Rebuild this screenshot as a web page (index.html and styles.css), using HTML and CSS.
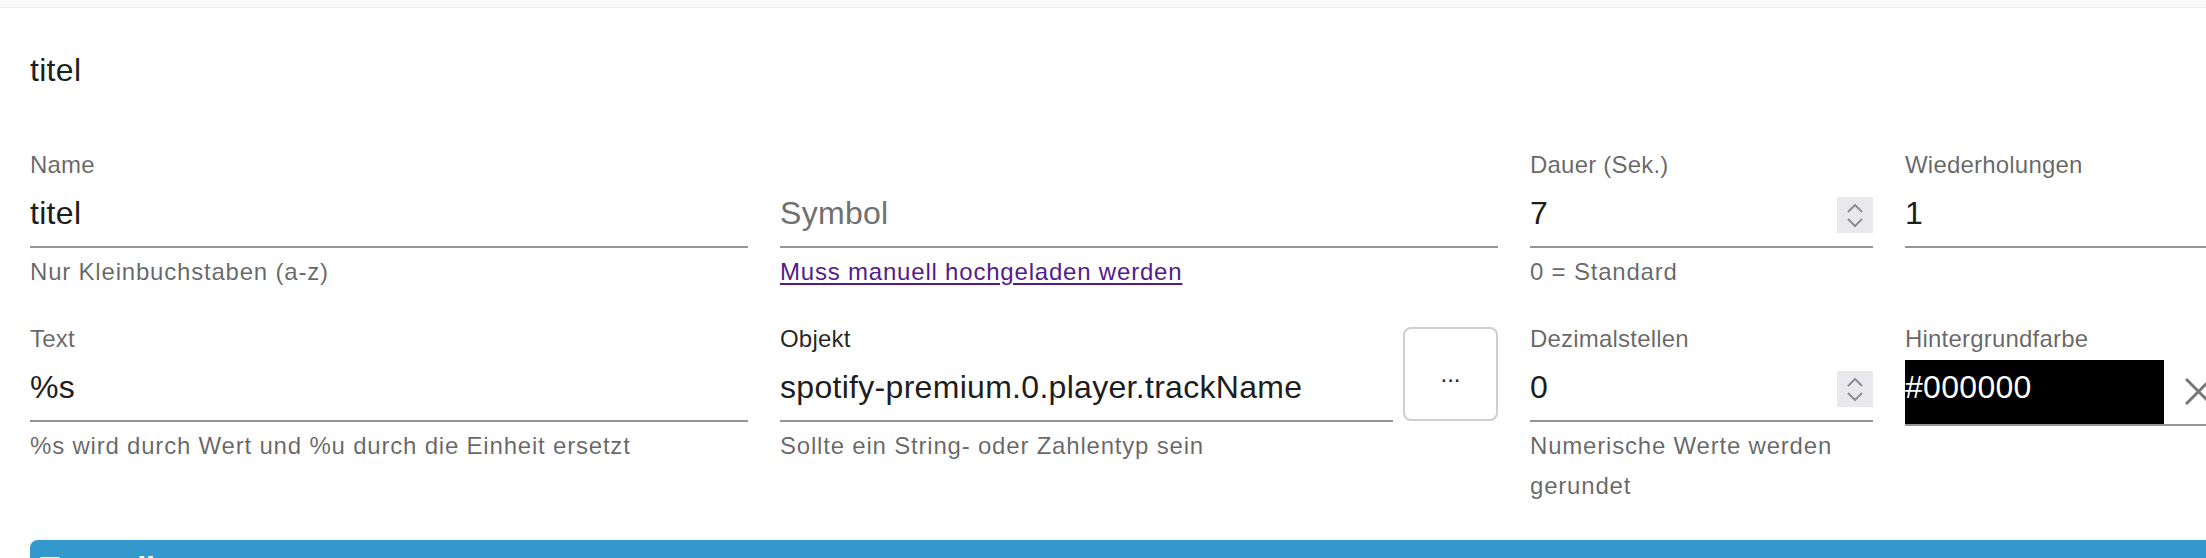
FILE: index.html
```html
<!DOCTYPE html>
<html lang="de">
<head>
<meta charset="utf-8">
<title>titel</title>
<link rel="stylesheet" href="styles.css">
</head>
<body>
<div class="topbar"></div>
<div class="title">titel</div>
<div class="grid">
  <div class="field">
    <div class="lbl">Name</div>
    <div class="inp"><span class="val">titel</span></div>
    <div class="help">Nur Kleinbuchstaben (a-z)</div>
  </div>
  <div class="field">
    <div class="lbl"></div>
    <div class="inp"><span class="val placeholder">Symbol</span></div>
    <div class="help"><a class="link" href="#">Muss manuell hochgeladen werden</a></div>
  </div>
  <div class="field">
    <div class="lbl">Dauer (Sek.)</div>
    <div class="inp"><span class="val">7</span>
      <span class="spin"><svg width="36" height="36" viewBox="0 0 36 36"><path d="M11 15 L18 8 L25 15 M11 22 L18 29 L25 22" fill="none" stroke="#8e8e93" stroke-width="2"/></svg></span>
    </div>
    <div class="help">0 = Standard</div>
  </div>
  <div class="field">
    <div class="lbl">Wiederholungen</div>
    <div class="inp"><span class="val">1</span>
      <span class="spin"><svg width="36" height="36" viewBox="0 0 36 36"><path d="M11 15 L18 8 L25 15 M11 22 L18 29 L25 22" fill="none" stroke="#8e8e93" stroke-width="2"/></svg></span>
    </div>
  </div>

  <div class="field">
    <div class="lbl">Text</div>
    <div class="inp"><span class="val">%s</span></div>
    <div class="help">%s wird durch Wert und %u durch die Einheit ersetzt</div>
  </div>
  <div class="field">
    <div class="objrow">
      <div class="objfield">
        <div class="lbl dark">Objekt</div>
        <div class="inp"><span class="val">spotify-premium.0.player.trackName</span></div>
      </div>
      <button class="dots" type="button">...</button>
    </div>
    <div class="help">Sollte ein String- oder Zahlentyp sein</div>
  </div>
  <div class="field">
    <div class="lbl">Dezimalstellen</div>
    <div class="inp"><span class="val">0</span>
      <span class="spin"><svg width="36" height="36" viewBox="0 0 36 36"><path d="M11 15 L18 8 L25 15 M11 22 L18 29 L25 22" fill="none" stroke="#8e8e93" stroke-width="2"/></svg></span>
    </div>
    <div class="help">Numerische Werte werden gerundet</div>
  </div>
  <div class="field">
    <div class="lbl">Hintergrundfarbe</div>
    <div class="colorrow">
      <span class="swatch">#000000</span>
      <span class="clear"><svg width="27" height="27" viewBox="0 0 27 27"><path d="M1 1 L26 26 M26 1 L1 26" stroke="#767676" stroke-width="3" fill="none"/></svg></span>
    </div>
  </div>
</div>
<div class="section">Textzeilen</div>
</body>
</html>
```

FILE: styles.css
```css
* { box-sizing: border-box; margin: 0; padding: 0; }
html, body { width: 2206px; height: 558px; overflow: hidden; background: #fff; }
body { font-family: "Liberation Sans", Arial, Helvetica, sans-serif; color: rgba(0,0,0,.87); }

.topbar { height: 8px; background: #fafafa; border-bottom: 1px solid #efefef; }

.title { margin: 39px 0 0 30px; font-size: 32px; line-height: 46px; height: 46px; letter-spacing: .3px; color: #1f1f1f; }

.grid {
  display: grid;
  grid-template-columns: 718px 718px 343px 343px;
  column-gap: 32px;
  row-gap: 34px;
  margin: 59px 0 0 30px;
  width: 2218px;
}

.field { display: flex; flex-direction: column; min-width: 0; }

.lbl { height: 32px; font-size: 24px; line-height: 26px; color: rgba(0,0,0,.6); letter-spacing: .2px; white-space: nowrap; }
.lbl.dark { color: rgba(0,0,0,.87); }

.inp { height: 64px; border-bottom: 2px solid #949494; display: flex; align-items: flex-start; padding-top: 6px; }
.val { flex: 1; min-width: 0; font-size: 32px; line-height: 46px; letter-spacing: .3px; white-space: nowrap; overflow: hidden; color: #1d1d1d; }
.val.placeholder { color: #707070; }

.spin { width: 36px; height: 36px; margin-top: 7px; background: #e9e9ed; display: flex; }

.help { margin-top: 4px; font-size: 24px; line-height: 40px; letter-spacing: .8px; color: rgba(0,0,0,.6); }
.link { color: #551a8b; text-decoration: underline; text-underline-offset: 3px; }

.objrow { display: flex; align-items: flex-start; gap: 10px; }
.objfield { flex: 1; min-width: 0; }
.dots {
  width: 95px; height: 94px; margin-top: 1px;
  border: 2px solid #cfcfcf; border-radius: 8px; background: #fff;
  font-family: "Liberation Sans", Arial, sans-serif; font-size: 24px; color: #222;
  letter-spacing: 0;
}

.colorrow { margin-top: 2px; height: 66px; border-bottom: 2px solid #949494; display: flex; align-items: flex-start; }
.swatch { width: 259px; height: 64px; background: #000; color: #fff; font-size: 32px; line-height: 46px; padding-top: 4px; letter-spacing: .3px; }
.clear { margin: 18px 0 0 21px; display: flex; }

.section {
  margin: 34px 0 0 30px;
  width: 2218px; height: 80px;
  background: #3399cc;
  border-radius: 8px 0 0 0;
  color: #fff; font-weight: bold; font-size: 32px; line-height: 40px;
  padding: 8px 0 0 10px;
  box-shadow: 0 -1px 3px rgba(0,0,0,.06);
}
```
